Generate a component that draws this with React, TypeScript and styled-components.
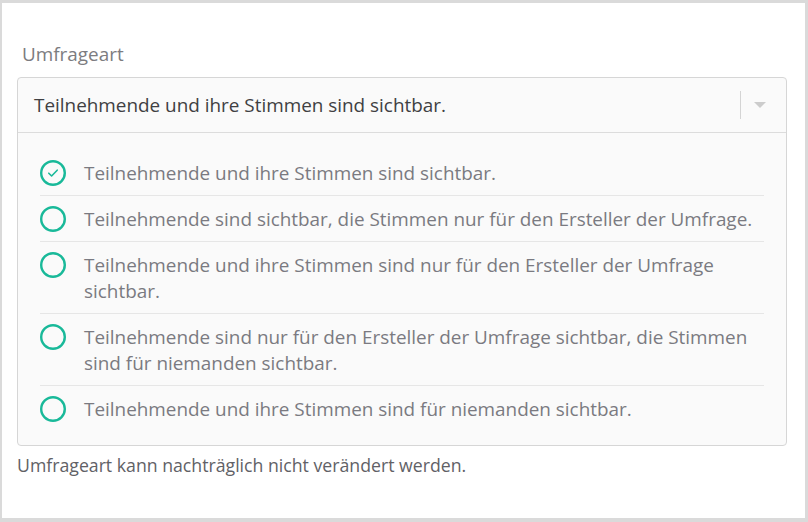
import React from "react";
import styled, { createGlobalStyle } from "styled-components";

const GlobalStyle = createGlobalStyle`
  html, body {
    margin: 0;
    padding: 0;
    background: #ffffff;
  }
  body {
    font-family: "Open Sans", "Lato", sans-serif;
  }
`;

const Frame = styled.div`
  box-sizing: border-box;
  width: 808px;
  height: 522px;
  border: 3px solid #dadada;
  border-left-width: 2px;
  border-bottom-width: 4px;
  background: #ffffff;
  padding: 38px 18px 0 15px;
`;

const FieldLabel = styled.div`
  font-size: 18.9px;
  line-height: 26px;
  color: #7c7c80;
  padding-left: 5px;
  margin-bottom: 10px;
`;

const SelectBox = styled.div`
  border: 1px solid #d6d6d6;
  border-radius: 4px;
  background: #fafafa;
`;

const SelectHeader = styled.div`
  display: flex;
  align-items: center;
  height: 54px;
  padding: 0 20px 0 16px;
  border-bottom: 1px solid #dcdcdc;
`;

const SelectValue = styled.div`
  flex: 1;
  font-size: 18.9px;
  color: #404042;
`;

const Separator = styled.span`
  width: 1px;
  height: 28px;
  background: #d4d4d4;
  margin-right: 13px;
`;

const Caret = styled.span`
  width: 0;
  height: 0;
  border-left: 6px solid transparent;
  border-right: 6px solid transparent;
  border-top: 6px solid #cccccc;
`;

const OptionList = styled.ul`
  list-style: none;
  margin: 0;
  padding: 17px 22px 13px 22px;
`;

const OptionRow = styled.li`
  display: flex;
  align-items: flex-start;
  gap: 18px;
  padding: 10px 0 9px;
  border-bottom: 1px solid #e6e6e6;

  &:last-child {
    border-bottom: none;
    padding-bottom: 10px;
  }
`;

const Radio = styled.span`
  flex: 0 0 auto;
  display: flex;
  align-items: center;
  justify-content: center;
  width: 26px;
  height: 26px;
`;

const OptionText = styled.div`
  font-size: 18.9px;
  line-height: 26px;
  color: #7a7a81;
`;

const HelpText = styled.div`
  font-size: 17.7px;
  line-height: 22px;
  color: #616166;
  margin-top: 8px;
`;

const options = [
  "Teilnehmende und ihre Stimmen sind sichtbar.",
  "Teilnehmende sind sichtbar, die Stimmen nur für den Ersteller der Umfrage.",
  "Teilnehmende und ihre Stimmen sind nur für den Ersteller der Umfrage sichtbar.",
  "Teilnehmende sind nur für den Ersteller der Umfrage sichtbar, die Stimmen sind für niemanden sichtbar.",
  "Teilnehmende und ihre Stimmen sind für niemanden sichtbar.",
];

const RadioIcon: React.FC<{ checked: boolean }> = ({ checked }) => (
  <svg width="26" height="26" viewBox="0 0 26 26">
    <circle cx="13" cy="13" r="11.8" fill="none" stroke="#19b999" strokeWidth="2.4" />
    {checked && (
      <path
        d="M8.8 13.2l2.8 2.8 5.6-5.8"
        fill="none"
        stroke="#19b999"
        strokeWidth="1.6"
        strokeLinecap="round"
        strokeLinejoin="round"
      />
    )}
  </svg>
);

const App: React.FC = () => {
  const selected = 0;
  return (
    <>
      <GlobalStyle />
      <Frame>
        <FieldLabel>Umfrageart</FieldLabel>
        <SelectBox>
          <SelectHeader>
            <SelectValue>{options[selected]}</SelectValue>
            <Separator />
            <Caret />
          </SelectHeader>
          <OptionList>
            {options.map((text, i) => (
              <OptionRow key={i}>
                <Radio>
                  <RadioIcon checked={i === selected} />
                </Radio>
                <OptionText>{text}</OptionText>
              </OptionRow>
            ))}
          </OptionList>
        </SelectBox>
        <HelpText>Umfrageart kann nachträglich nicht verändert werden.</HelpText>
      </Frame>
    </>
  );
};

export default App;
